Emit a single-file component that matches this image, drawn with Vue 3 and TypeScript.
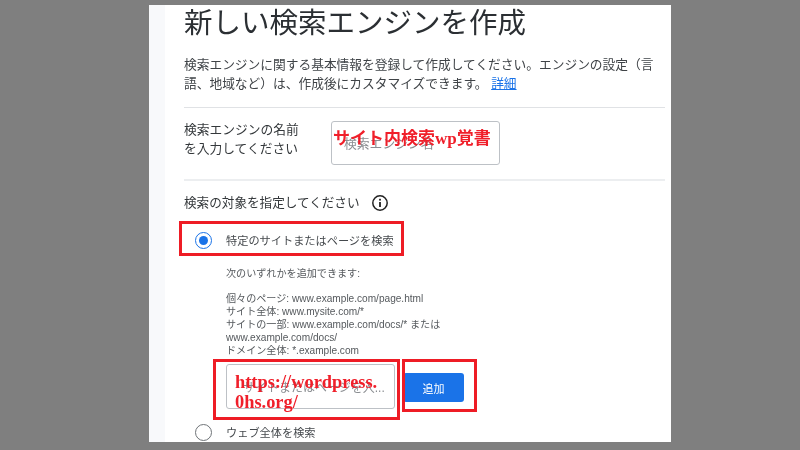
<script setup lang="ts">
const examples: string[] = [
  '個々のページ: www.example.com/page.html',
  'サイト全体: www.mysite.com/*',
  'サイトの一部: www.example.com/docs/* または',
  'www.example.com/docs/',
  'ドメイン全体: *.example.com',
]
</script>

<template>
  <div class="stage">
    <div class="page">
      <div class="strip"></div>
      <main class="content">
        <h1 class="title">新しい検索エンジンを作成</h1>
        <p class="desc">
          検索エンジンに関する基本情報を登録して作成してください。エンジンの設定（言語、地域など）は、作成後にカスタマイズできます。
          <a class="link">詳細</a>
        </p>
        <hr class="rule rule-a" />
        <div class="name-row">
          <div class="label">検索エンジンの名前<br />を入力してください</div>
          <div class="name-input">
            <span class="ph">検索エンジン名</span>
            <span class="note note-name">サイト内検索wp覚書</span>
          </div>
        </div>
        <hr class="rule rule-b" />
        <div class="target-head">
          <span>検索の対象を指定してください</span>
          <svg class="info" viewBox="0 0 18 18" width="18" height="18">
            <circle cx="9" cy="9" r="7.2" fill="none" stroke="#222" stroke-width="1.5" />
            <rect x="8.1" y="8" width="1.8" height="5" fill="#222" />
            <rect x="8.1" y="4.8" width="1.8" height="1.8" fill="#222" />
          </svg>
        </div>
        <div class="option option-on">
          <span class="radio radio-on"><span class="dot"></span></span>
          <span class="opt-label">特定のサイトまたはページを検索</span>
        </div>
        <div class="help">
          <p class="help-intro">次のいずれかを追加できます:</p>
          <p v-for="line in examples" :key="line" class="help-line">{{ line }}</p>
        </div>
        <div class="add-row">
          <div class="url-input">
            <span class="ph ph-url">サイトまたはページを入...</span>
            <span class="note note-url">https://wordpress.<br />0hs.org/</span>
          </div>
          <button class="add" type="button">追加</button>
        </div>
        <div class="option option-off">
          <span class="radio"></span>
          <span class="opt-label">ウェブ全体を検索</span>
        </div>
        <div class="mark mark-radio"></div>
        <div class="mark mark-url"></div>
        <div class="mark mark-add"></div>
      </main>
    </div>
  </div>
</template>

<style scoped>
.stage {
  width: 800px;
  height: 450px;
  background: #7f7f7f;
  display: flex;
  justify-content: center;
  align-items: flex-start;
  padding-top: 5px;
  box-sizing: border-box;
  overflow: hidden;
  font-family: "Liberation Sans", "Noto Sans CJK JP", sans-serif;
  text-spacing-trim: space-all;
}
.page {
  width: 522px;
  height: 437px;
  margin-left: 20px;
  background: #fff;
  display: flex;
  overflow: hidden;
  filter: blur(0.5px);
}
.strip {
  width: 16px;
  flex: none;
  background: #f8f9fb;
}
.content {
  position: relative;
  flex: 1;
  padding: 0 6px 0 19px;
  min-width: 0;
}
.title {
  margin: 0;
  font-size: 28.5px;
  line-height: 36px;
  font-weight: 400;
  color: #2b2f33;
}
.desc {
  margin: 14px 0 0;
  font-size: 12.73px;
  line-height: 19px;
  color: #3f4347;
  width: 476px;
}
.link {
  color: #1a73e8;
  text-decoration: underline;
}
.rule {
  border: 0;
  height: 1px;
  margin: 0;
  background: #e0e2e5;
}
.rule-a {
  margin-top: 14px;
}
.name-row {
  display: flex;
  margin-top: 11px;
}
.label {
  width: 147px;
  flex: none;
  padding-top: 1px;
  font-size: 12.75px;
  line-height: 19px;
  color: #34383b;
}
.name-input {
  position: relative;
  width: 169px;
  height: 44px;
  margin-top: 2px;
  box-sizing: border-box;
  border: 1px solid #bdc1c6;
  border-radius: 3px;
}
.ph {
  position: absolute;
  left: 12px;
  top: 14px;
  font-size: 12.8px;
  line-height: 15px;
  color: #8a8d91;
  white-space: nowrap;
}
.note {
  position: absolute;
  color: #f01f2a;
  font-family: "Liberation Serif", "Noto Sans CJK JP", serif;
  font-weight: 700;
  white-space: nowrap;
}
.note-name {
  left: 1px;
  top: 7px;
  font-size: 17px;
  line-height: 20px;
}
.rule-b {
  margin-top: 14px;
  height: 2px;
  background: #eceef0;
}
.target-head {
  display: flex;
  align-items: center;
  gap: 11px;
  margin-top: 11px;
  height: 18px;
  font-size: 12.6px;
  color: #34383b;
}
.info {
  margin-top: 3px;
}
.option {
  display: flex;
  align-items: center;
  gap: 14px;
  padding-left: 11px;
  height: 20px;
}
.option-on {
  margin-top: 20px;
}
.option-off {
  margin-top: 13px;
}
.radio {
  width: 17px;
  height: 17px;
  box-sizing: border-box;
  border: 1.5px solid #6f7478;
  border-radius: 50%;
  display: flex;
  align-items: center;
  justify-content: center;
  flex: none;
}
.radio-on {
  border-color: #1a73e8;
}
.dot {
  width: 9px;
  height: 9px;
  border-radius: 50%;
  background: #1a73e8;
}
.opt-label {
  font-size: 11.2px;
  color: #45494d;
  white-space: nowrap;
}
.help {
  margin: 17px 0 0 42px;
  font-size: 10.1px;
  line-height: 13px;
  color: #55595d;
}
.help p {
  margin: 0;
}
.help-intro {
  margin-bottom: 12px !important;
}
.add-row {
  display: flex;
  align-items: center;
  gap: 8px;
  margin: 7px 0 0 42px;
}
.url-input {
  position: relative;
  width: 169px;
  height: 45px;
  box-sizing: border-box;
  border: 1px solid #bdc1c6;
  border-radius: 3px;
}
.ph-url {
  left: 16px;
  top: 16px;
  font-size: 12px;
}
.note-url {
  left: 8px;
  top: 7px;
  font-size: 18.4px;
  line-height: 20px;
}
.add {
  width: 61px;
  height: 29px;
  margin-top: 2px;
  border: 0;
  padding: 0;
  border-radius: 3px;
  background: #1a73e8;
  color: #fff;
  font-family: inherit;
  font-size: 11px;
}
.mark {
  position: absolute;
  box-sizing: border-box;
  border: 3px solid #ee1c25;
}
.mark-radio {
  left: 14px;
  top: 216px;
  width: 225px;
  height: 35px;
}
.mark-url {
  left: 48px;
  top: 354px;
  width: 187px;
  height: 61px;
}
.mark-add {
  left: 237px;
  top: 354px;
  width: 75px;
  height: 53px;
}
</style>
